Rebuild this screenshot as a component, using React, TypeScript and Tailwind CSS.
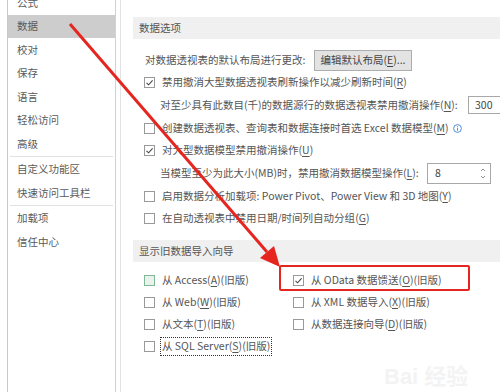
import type { ReactNode } from 'react';

const navItems = ['公式', '数据', '校对', '保存', '语言', '轻松访问', '高级', '-', '自定义功能区', '快速访问工具栏', '-', '加载项', '信任中心'];

function Box({ checked = false, tone = 'plain' }: { checked?: boolean; tone?: 'plain' | 'green' }) {
  return (
    <span
      className={`w-[11px] h-[11px] shrink-0 border flex items-center justify-center ${
        tone === 'green' ? 'border-[#7fb894] bg-[#e9f2ec]' : 'border-[#999] bg-white'
      }`}
    >
      {checked && (
        <svg width="9" height="9" viewBox="0 0 9 9">
          <path d="M1.5 4.8 L3.6 6.8 L7.6 2.4" fill="none" stroke="#444" strokeWidth="1.1" />
        </svg>
      )}
    </span>
  );
}

function Check({ checked, tone, children }: { checked?: boolean; tone?: 'plain' | 'green'; children: ReactNode }) {
  return (
    <div className="flex items-center gap-[7px]">
      <Box checked={checked} tone={tone} />
      <span className="whitespace-nowrap">{children}</span>
    </div>
  );
}

function U({ k }: { k: string }) {
  return (
    <>
      (<span className="underline underline-offset-2">{k}</span>)
    </>
  );
}

export default function App() {
  return (
    <div className="relative w-[500px] h-[392px] overflow-hidden bg-white flex text-[10.5px] leading-none text-[#555] font-['Noto_Sans_CJK_SC','Liberation_Sans',sans-serif]">
      <div className="w-[8px] shrink-0 border-r border-[#c8c8c8]" />

      {/* left nav */}
      <div className="w-[108px] shrink-0 border-r border-[#d2d2d2]">
        <div className="mt-[-9px] flex flex-col">
          {navItems.map((item, i) =>
            item === '-' ? (
              <div key={i} className="h-[2px] flex items-center px-[2px]">
                <div className="h-px w-full bg-[#e1e1e1]" />
              </div>
            ) : (
              <div
                key={i}
                className={`h-[23.5px] flex items-center pl-[9px] text-[#5a5a5a] ${item === '数据' ? 'bg-[#cdcdcd]' : ''}`}
              >
                {item}
              </div>
            )
          )}
        </div>
      </div>

      <div className="w-[4px] shrink-0" />

      {/* content */}
      <div className="flex-1 border-l border-[#e3e3e3] pl-[12px] pt-[17px] min-w-0">
        <div className="h-[22px] bg-[#f0f0f0] flex items-center pl-[6px]">数据选项</div>

        <div className="mt-[10px] h-[22px] flex items-center pl-[12px]">
          <span className="w-[169px] shrink-0 whitespace-nowrap">对数据透视表的默认布局进行更改:</span>
          <button className="w-[98px] h-[21px] shrink-0 bg-[#e3e3e3] border border-[#adadad] flex items-center justify-center whitespace-nowrap text-[#444]">
            编辑默认布局<U k="E" />...
          </button>
        </div>

        <div className="h-[22px] flex items-center pl-[11px]">
          <Check checked>禁用撤消大型数据透视表刷新操作以减少刷新时间<U k="R" /></Check>
        </div>

        <div className="h-[24px] flex items-center pl-[27px]">
          <span className="w-[308px] shrink-0 whitespace-nowrap">对至少具有此数目(千)的数据源行的数据透视表禁用撤消操作<U k="N" />:</span>
          <div className="w-[40px] h-[18px] shrink-0 border border-[#a8a8a8] flex items-center pl-[6px] text-[#444]">300</div>
        </div>

        <div className="h-[22px] flex items-center pl-[11px]">
          <Check>创建数据透视表、查询表和数据连接时首选 Excel 数据模型<U k="M" /></Check>
          <svg className="ml-[4px]" width="9" height="9" viewBox="0 0 9 9">
            <circle cx="4.5" cy="4.5" r="3.9" fill="none" stroke="#3b82d6" strokeWidth="0.9" />
            <rect x="4.05" y="3.8" width="0.9" height="3" fill="#3b82d6" />
            <rect x="4.05" y="2.2" width="0.9" height="0.9" fill="#3b82d6" />
          </svg>
        </div>

        <div className="h-[22px] flex items-center pl-[11px]">
          <Check checked>对大型数据模型禁用撤消操作<U k="U" /></Check>
        </div>

        <div className="h-[24px] flex items-center pl-[27px]">
          <span className="w-[267px] shrink-0 whitespace-nowrap">当模型至少为此大小(MB)时，禁用撤消数据模型操作<U k="L" />:</span>
          <div className="w-[64px] h-[21px] shrink-0 border border-[#a8a8a8] flex items-center justify-between pl-[7px] pr-[4px] text-[#444]">
            <span>8</span>
            <svg width="6" height="13" viewBox="0 0 6 13">
              <path d="M1 4 L3 2 L5 4" fill="none" stroke="#777" strokeWidth="0.8" />
              <path d="M1 9 L3 11 L5 9" fill="none" stroke="#777" strokeWidth="0.8" />
            </svg>
          </div>
        </div>

        <div className="h-[22px] flex items-center pl-[11px]">
          <Check>启用数据分析加载项: Power Pivot、Power View 和 3D 地图<U k="Y" /></Check>
        </div>

        <div className="h-[22px] flex items-center pl-[11px]">
          <Check>在自动透视表中禁用日期/时间列自动分组<U k="G" /></Check>
        </div>

        <div className="mt-[11px] h-[22px] bg-[#f0f0f0] flex items-center pl-[6px]">显示旧数据导入向导</div>

        <div className="mt-[7px] pl-[11px] flex flex-col">
          <div className="h-[22px] flex items-center">
            <div className="w-[149px] shrink-0"><Check tone="green">从 Access<U k="A" />(旧版)</Check></div>
            <Check checked>从 OData 数据馈送<U k="O" />(旧版)</Check>
          </div>
          <div className="h-[22px] flex items-center">
            <div className="w-[149px] shrink-0"><Check>从 Web<U k="W" />(旧版)</Check></div>
            <Check>从 XML 数据导入<U k="X" />(旧版)</Check>
          </div>
          <div className="h-[22px] flex items-center">
            <div className="w-[149px] shrink-0"><Check>从文本<U k="T" />(旧版)</Check></div>
            <Check>从数据连接向导<U k="D" />(旧版)</Check>
          </div>
          <div className="h-[22px] flex items-center gap-[5px]">
            <Box />
            <span className="h-[19px] px-[1px] flex items-center border border-dotted border-[#333] whitespace-nowrap">
              从 SQL Server<U k="S" />(旧版)
            </span>
          </div>
        </div>
      </div>

      {/* annotation overlays */}
      <div className="absolute left-[279px] top-[265px] w-[191px] h-[26px] border-2 border-[#e52620] rounded-[2px]" />
      <svg className="absolute left-0 top-0 pointer-events-none" width="500" height="392" viewBox="0 0 500 392">
        <line x1="70" y1="24" x2="267" y2="252" stroke="#e52620" strokeWidth="3" />
        <polygon points="280,267 260,258 274,246" fill="#e52620" />
      </svg>
      <div className="absolute left-[384px] top-[366px] text-[22px] font-bold text-[#f3f3f3] whitespace-nowrap font-['Liberation_Sans','Noto_Sans_CJK_SC',sans-serif]">
        Bai 经验
      </div>
    </div>
  );
}
